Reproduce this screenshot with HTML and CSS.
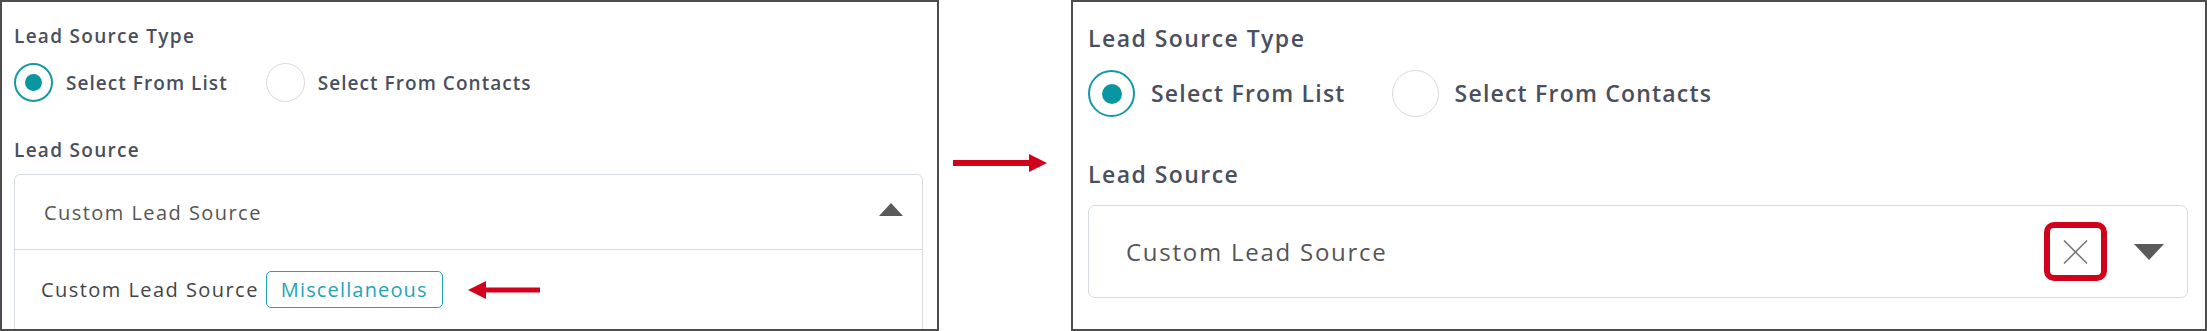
FILE: index.html
```html
<!DOCTYPE html>
<html lang="en">
<head>
  <meta charset="UTF-8">
  <title>Lead Source Field</title>
  <link rel="stylesheet" href="styles.css">
</head>
<body>

<div class="compare">

  <!-- Before: dropdown open -->
  <section class="panel panel-before">
    <div class="field-label">Lead Source Type</div>
    <div class="radio-group">
      <label class="radio checked"><span class="circle"></span>Select From List</label>
      <label class="radio"><span class="circle"></span>Select From Contacts</label>
    </div>

    <div class="field-label field-label-gap">Lead Source</div>
    <div class="select open">
      <div class="select-value">
        <span>Custom Lead Source</span>
        <span class="caret caret-up"></span>
      </div>
      <div class="option">
        <span>Custom Lead Source</span>
        <span class="tag">Miscellaneous</span>
        <svg class="pointer" width="72" height="18" viewBox="0 0 72 18">
          <polygon points="0,9 18,0 18,6.5 72,6.5 72,11.5 18,11.5 18,18" fill="#d0021b"/>
        </svg>
      </div>
    </div>
  </section>

  <div class="between">
    <svg width="94" height="18" viewBox="0 0 94 18">
      <polygon points="0,6 76,6 76,0 94,9 76,18 76,12 0,12" fill="#d0021b"/>
    </svg>
  </div>

  <!-- After: value selected, clear button shown -->
  <section class="panel panel-after">
    <div class="field-label">Lead Source Type</div>
    <div class="radio-group">
      <label class="radio checked"><span class="circle"></span>Select From List</label>
      <label class="radio"><span class="circle"></span>Select From Contacts</label>
    </div>

    <div class="field-label field-label-gap">Lead Source</div>
    <div class="select">
      <span class="select-text">Custom Lead Source</span>
      <span class="clear-box">
        <svg width="25" height="24" viewBox="0 0 25 24">
          <path d="M1 0.5 L24 23.5 M24 0.5 L1 23.5" stroke="#7a7a7a" stroke-width="1.6" fill="none"/>
        </svg>
      </span>
      <span class="caret caret-down"></span>
    </div>
  </section>

</div>

</body>
</html>
```

FILE: styles.css
```css
body {
  margin: 0;
  background: #fff;
  font-family: "Open Sans", "Liberation Sans", sans-serif;
  color: #4a4f5e;
}

.compare {
  display: flex;
  width: 2207px;
  height: 331px;
  overflow: hidden;
}

.panel {
  box-sizing: border-box;
  height: 331px;
  border: 2px solid #4d4d4d;
  overflow: hidden;
  display: flex;
  flex-direction: column;
  align-items: flex-start;
}

.field-label {
  font-weight: 600;
}

.radio-group {
  display: flex;
  align-items: center;
}

.radio {
  display: flex;
  align-items: center;
  font-weight: 600;
}

.circle {
  box-sizing: border-box;
  border-radius: 50%;
  border: 1.5px solid #d5dae0;
  display: flex;
  align-items: center;
  justify-content: center;
}

.radio.checked .circle {
  border: 2px solid #1798a5;
}

.radio.checked .circle::after {
  content: "";
  border-radius: 50%;
  background: #0a96a0;
}

.caret {
  width: 0;
  height: 0;
  border-style: solid;
  border-color: transparent;
}

/* ---- before (smaller) ---- */

.panel-before {
  width: 939px;
  padding: 22px 0 0 12px;
  font-size: 19px;
  line-height: 24px;
  letter-spacing: 1.3px;
}

.panel-before .radio-group {
  margin-top: 15px;
  height: 39px;
  letter-spacing: 1.05px;
}

.panel-before .radio + .radio {
  margin-left: 38px;
}

.panel-before .circle {
  width: 39px;
  height: 39px;
  margin-right: 13px;
}

.panel-before .radio.checked .circle::after {
  width: 17px;
  height: 17px;
}

.panel-before .field-label-gap {
  margin-top: 36px;
}

.panel-before .select {
  margin-top: 12px;
  width: 909px;
  height: 200px;
  box-sizing: border-box;
  border: 1px solid #d5dae0;
  border-radius: 6px 6px 0 0;
  flex-shrink: 0;
  font-size: 20px;
  line-height: 25px;
  letter-spacing: 1.45px;
  color: #555;
}

.select-value {
  height: 75px;
  box-sizing: border-box;
  border-bottom: 1px solid #d5dae0;
  display: flex;
  align-items: center;
  justify-content: space-between;
  padding: 0 19px 0 29px;
}

.caret-up {
  border-width: 0 12.5px 13px 12.5px;
  border-bottom-color: #5a5a5a;
  margin-top: -5px;
}

.option {
  display: flex;
  align-items: center;
  padding: 21px 0 0 26px;
  color: #444;
}

.tag {
  margin-left: 7px;
  height: 37px;
  box-sizing: border-box;
  padding: 0 14px;
  display: flex;
  align-items: center;
  border: 1.5px solid #1ea5b5;
  border-radius: 5px;
  color: #1ea5b5;
  letter-spacing: 1.15px;
}

.pointer {
  margin-left: 25px;
}

.between {
  width: 132px;
  flex-shrink: 0;
  padding: 154px 0 0 14px;
  box-sizing: border-box;
}

/* ---- after (larger) ---- */

.panel-after {
  width: 1136px;
  padding: 22px 0 0 15px;
  font-size: 23px;
  line-height: 29px;
  letter-spacing: 1.45px;
}

.panel-after .radio-group {
  margin-top: 17px;
  height: 47px;
  letter-spacing: 1.2px;
}

.panel-after .radio + .radio {
  margin-left: 46px;
}

.panel-after .circle {
  width: 47px;
  height: 47px;
  margin-right: 16px;
}

.panel-after .radio.checked .circle {
  border-width: 2.5px;
}

.panel-after .radio.checked .circle::after {
  width: 20px;
  height: 20px;
}

.panel-after .field-label-gap {
  margin-top: 43px;
}

.panel-after .select {
  margin-top: 16px;
  width: 1100px;
  height: 93px;
  box-sizing: border-box;
  border: 1px solid #d5dae0;
  border-radius: 7px;
  display: flex;
  align-items: center;
  padding: 0 23px 0 37px;
  font-size: 24px;
  line-height: 30px;
  letter-spacing: 1.75px;
  color: #555;
}

.select-text {
  flex: 1;
}

.clear-box {
  box-sizing: border-box;
  width: 63px;
  height: 59px;
  border: 6px solid #d0021b;
  border-radius: 10px;
  display: flex;
  align-items: center;
  justify-content: center;
}

.caret-down {
  margin-left: 27px;
  border-width: 16px 15.5px 0 15.5px;
  border-top-color: #5a5a5a;
}
```
